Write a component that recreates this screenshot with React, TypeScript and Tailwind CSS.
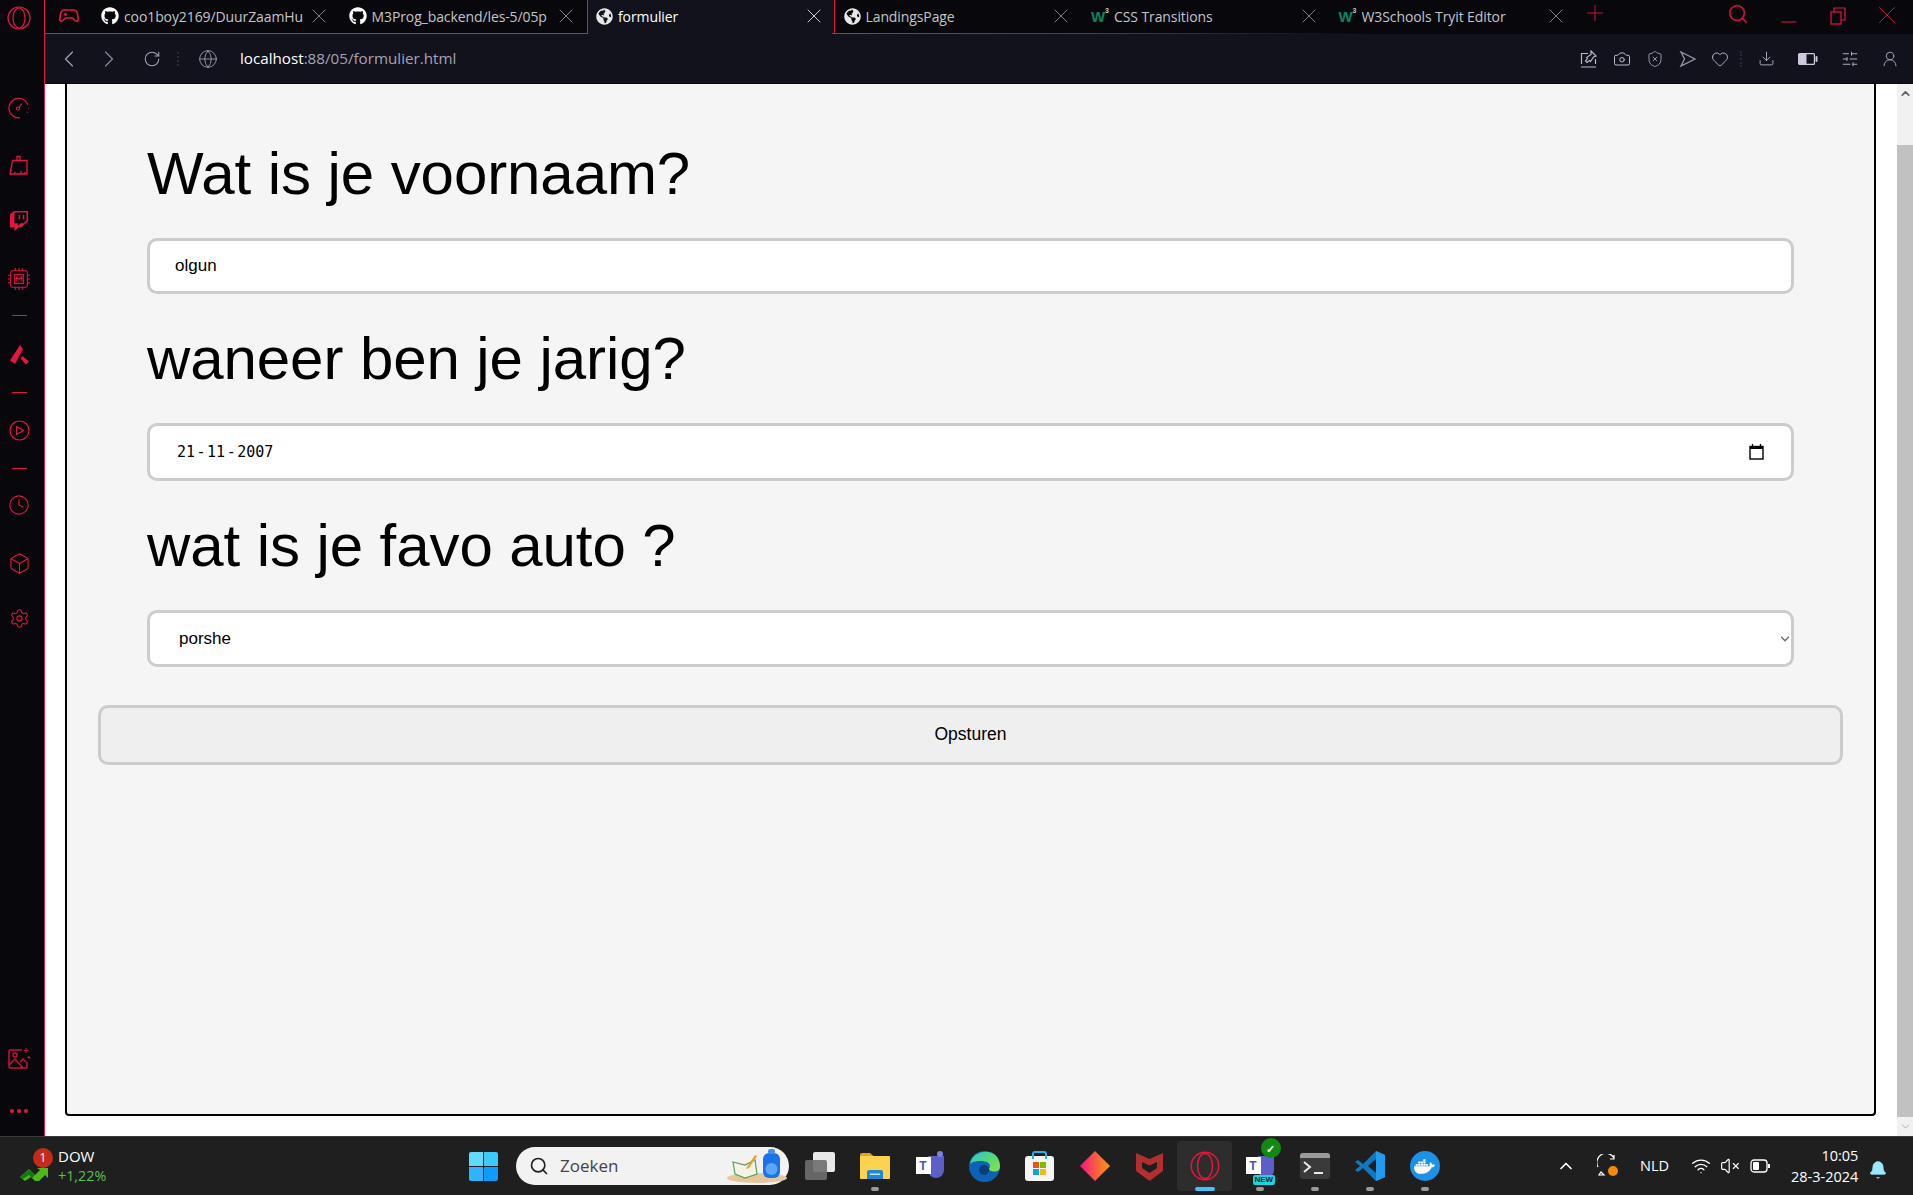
import {
  Box,
  Camera,
  ChevronDown,
  ChevronLeft,
  ChevronRight,
  ChevronUp,
  Clock,
  Download,
  Globe,
  Heart,
  Minus,
  Plus,
  RotateCw,
  Search,
  Settings,
  ShieldX,
  SlidersHorizontal,
  UserRound,
  VolumeX,
  Wifi,
  X,
  Bell,
} from "lucide-react";
import { FaDocker, FaGithub, FaGlobeAmericas, FaTwitch } from "react-icons/fa";

const ui = "font-['Open_Sans','Noto_Sans',sans-serif]";

function OperaLogo({ size = 24, className = "text-[#e3173e]" }: { size?: number; className?: string }) {
  return (
    <svg width={size} height={size} viewBox="0 0 24 24" fill="none" stroke="currentColor" strokeWidth="1.2" className={className}>
      <circle cx="12" cy="12" r="11" />
      <ellipse cx="12" cy="12" rx="6" ry="10" />
    </svg>
  );
}

function W3Logo() {
  return (
    <span className="relative w-[18px] shrink-0 font-['Liberation_Sans',sans-serif] text-[15px] leading-none font-bold text-[#04895e]">
      W<span className="absolute -top-[2px] right-0 text-[7px] text-[#c9c9c9]">3</span>
    </span>
  );
}

type TabItem = { title: string; icon: "github" | "globe" | "w3"; active?: boolean };

const tabs: TabItem[] = [
  { title: "coo1boy2169/DuurZaamHu", icon: "github" },
  { title: "M3Prog_backend/les-5/05p", icon: "github" },
  { title: "formulier", icon: "globe", active: true },
  { title: "LandingsPage", icon: "globe" },
  { title: "CSS Transitions", icon: "w3" },
  { title: "W3Schools Tryit Editor", icon: "w3" },
];

function Tab({ tab }: { tab: TabItem }) {
  return (
    <div
      className={
        tab.active
          ? "flex h-[34px] w-[247.5px] shrink-0 items-center gap-[5px] border-x border-[#e3173e] bg-[#12121c] pr-[8px] pb-[2px] pl-[8px] text-white"
          : "flex h-[34px] w-[247.5px] shrink-0 items-center gap-[5px] pr-[9px] pb-[2px] pl-[9px] text-[#c4c4c8]"
      }
    >
      {tab.icon === "github" && <FaGithub size={18} className="shrink-0 text-white" />}
      {tab.icon === "globe" && <FaGlobeAmericas size={17} className="shrink-0 text-[#e8e8e8]" />}
      {tab.icon === "w3" && <W3Logo />}
      <span className="min-w-0 flex-1 overflow-hidden text-[14px] tracking-[-0.1px] whitespace-nowrap">{tab.title}</span>
      <X size={24} strokeWidth={0.8} className={tab.active ? "-ml-[2px] shrink-0 text-white" : "-ml-[2px] shrink-0 text-[#a0a0a4]"} />
    </div>
  );
}

function TabStrip() {
  return (
    <div className="relative flex h-[34px] shrink-0 bg-[#07070c]">
      <div className="flex w-[47px] shrink-0 items-center justify-center pb-[2px]">
        <svg width="20" height="16" viewBox="0 0 20 16" fill="none" stroke="#e3173e" strokeWidth="1.6">
          <path d="M5 2h10c2 0 3 1.500 3.500 4l.8 5c.2 2-1.800 3-3.300 1.500L13.500 10h-7L4 12.500C2.500 14 .5 13 .7 11l.8-5C2 3.500 3 2 5 2z" />
          <path d="M5 6.500h3M6.500 5v3M13 6.500h.1M15 6.500h.1" />
        </svg>
      </div>
      {tabs.map((tab) => (
        <Tab key={tab.title} tab={tab} />
      ))}
      <Plus size={26} strokeWidth={0.8} className="ml-[5px] text-[#e3173e]" />
      <Search size={22} strokeWidth={1.9} className="mt-[3px] ml-[119px] text-[#c8143c]" />
      <Minus size={24} strokeWidth={1} className="mt-[10px] ml-[28px] text-[#e3173e]" />
      <svg width="17" height="18" viewBox="0 0 17 18" fill="none" stroke="#e3173e" strokeWidth="1.2" className="mt-[7px] ml-[29px]">
        <rect x="1" y="5" width="10" height="12" />
        <path d="M4 5V1h11v12h-4" />
      </svg>
      <X size={30} strokeWidth={0.7} className="ml-[25px] text-[#e3173e]" />
      {/* red line under the tabs, stops at the active tab */}
      <div className="absolute top-[33px] left-0 h-px w-[542px] bg-[#e3173e]" />
      <div className="absolute top-[33px] left-[787px] h-px w-[540px] bg-gradient-to-r from-[#e3173e] via-[#a3142f] to-transparent" />
    </div>
  );
}

function PinIcon() {
  return (
    <svg width="18" height="18" viewBox="0 0 18 18" fill="none" stroke="#b9b6c6" strokeWidth="1.2">
      <path d="M1 17h15M1.500 14V3.500H8M15.500 9v5" />
      <path d="M11 1l5 5-2.500 1-3 4.500-1-1L7 12.500 5.500 11l2-2.500-1-1L11 4.500z" />
    </svg>
  );
}

function SendIcon() {
  return (
    <svg width="18" height="18" viewBox="0 0 18 18" fill="none" stroke="#9a97a6" strokeWidth="1.3">
      <path d="M2 2l14 7-14 7 3.500-7z" />
    </svg>
  );
}

function BatteryIcon() {
  return (
    <svg width="20" height="12" viewBox="0 0 20 12" fill="none">
      <rect x=".6" y=".6" width="15.800" height="10.800" rx="1" stroke="#cfc9dd" strokeWidth="1.200" />
      <rect x="1" y="1" width="7.500" height="10" fill="#cfc9dd" />
      <rect x="17.500" y="3" width="2" height="6" rx="1" fill="#cfc9dd" />
    </svg>
  );
}

function Toolbar() {
  return (
    <div className={`flex h-[50px] shrink-0 items-center border-b border-[#08080c] bg-[#12121c] pr-[14px] pl-[10px] ${ui} text-[#a6a3b4]`}>
      <ChevronLeft size={28} strokeWidth={1} />
      <ChevronRight size={28} strokeWidth={1} className="ml-[12px] text-[#8b8896]" />
      <RotateCw size={18} strokeWidth={1.4} className="ml-[20px]" />
      <span className="ml-[16px] h-[14px] w-[2px] border-l-2 border-dotted border-[#2a2a36]" />
      <Globe size={20} strokeWidth={1} className="ml-[19px]" />
      <div className="ml-[22px] text-[15.2px] leading-none whitespace-nowrap">
        <span className="text-white">localhost</span>
        <span className="text-[#a6a3b4]">:88/05/formulier.html</span>
      </div>
      <div className="ml-auto flex items-center">
        <PinIcon />
        <Camera size={18} strokeWidth={1.3} className="ml-[15px] text-[#c2bfcf]" />
        <ShieldX size={18} strokeWidth={1.2} className="ml-[15px] text-[#a6a3b4]" />
        <span className="ml-[15px]"><SendIcon /></span>
        <Heart size={18} strokeWidth={1.2} className="ml-[14px] text-[#c2bfcf]" />
        <span className="ml-[11px] h-[16px] w-[2px] border-l-2 border-dotted border-[#2a2a36]" />
        <Download size={17} strokeWidth={1.2} className="ml-[16px] text-[#c2bfcf]" />
        <span className="ml-[23px]"><BatteryIcon /></span>
        <SlidersHorizontal size={18} strokeWidth={1.2} className="ml-[23px] text-[#c2bfcf]" />
        <UserRound size={18} strokeWidth={1.3} className="ml-[22px] text-[#a6a3b4]" />
      </div>
    </div>
  );
}

function SpeedIcon() {
  return (
    <svg width="22" height="22" viewBox="0 0 22 22" fill="none" stroke="#e3173e" strokeWidth="1.200">
      <path d="M20 8A9.800 9.800 0 1 0 12 20.800" />
      <path d="M20.700 11v.8M19.500 15v.8" />
      <circle cx="10" cy="11.500" r="1.500" />
      <path d="M11 10.500l3-4" />
    </svg>
  );
}

function BroomIcon() {
  return (
    <svg width="22" height="22" viewBox="0 0 22 22" fill="none" stroke="#e3173e" strokeWidth="1.300">
      <path d="M9 6V2.500h3V6" />
      <path d="M4.500 6.500h14.500v13.500H2z" />
      <path d="M3 16.500h1M7 20v-2M13 20v-3M17 20v-2" />
    </svg>
  );
}

function CpuIcon() {
  return (
    <svg width="26" height="26" viewBox="0 0 26 26" fill="none" stroke="#e3173e" strokeWidth="1.100">
      <rect x="4" y="4" width="18" height="18" rx="2" />
      <rect x="8" y="8" width="10" height="10" fill="#e3173e" fillOpacity=".25" />
      <path d="M10 15v-4l3 2.500 3-2.500v4" />
      <path d="M9 1v3M13 1v3M17 1v3M9 22v3M13 22v3M17 22v3M1 9h3M1 13h3M1 17h3M22 9h3M22 13h3M22 17h3" />
    </svg>
  );
}

function PeakIcon() {
  return (
    <svg width="22" height="22" viewBox="0 0 22 22" fill="#e3173e">
      <path d="M12 1l3 4-8 15-5-3.500zM14.500 12l6.500 5.500-3 3-5.500-6z" />
    </svg>
  );
}

function GalleryIcon() {
  return (
    <svg width="24" height="24" viewBox="0 0 24 24" fill="none" stroke="#c8143c" strokeWidth="1.500">
      <path d="M15 3H3a1 1 0 0 0-1 1v16a1 1 0 0 0 1 1h16a1 1 0 0 0 1-1v-5" />
      <circle cx="8" cy="8" r="2" />
      <path d="M2 18l6-6 8 9M13 15l3-3 3 3" />
      <path d="M19 1v5M16.500 3.500h5M22 9v3M20.500 10.500h3" strokeWidth="1" />
    </svg>
  );
}

function SideLine({ className }: { className: string }) {
  return <div className={`h-px w-[15px] shrink-0 bg-[#e3173e] ${className}`} />;
}

function Sidebar() {
  const slot = "flex h-6 w-6 shrink-0 items-center justify-center text-[#e3173e]";
  return (
    <aside className="flex h-[1136px] w-[45px] shrink-0 flex-col items-center border-r border-[#e3173e] bg-[#07070c] pr-[6px] pb-[13px]">
      <div className={`${slot} mt-[6px]`}><OperaLogo /></div>
      <div className={`${slot} mt-[66px]`}><SpeedIcon /></div>
      <div className={`${slot} mt-[33px]`}><BroomIcon /></div>
      <div className={`${slot} mt-[32px]`}><FaTwitch size={20} /></div>
      <div className={`${slot} mt-[34px]`}><CpuIcon /></div>
      <SideLine className="mt-[24px]" />
      <div className={`${slot} mt-[27px]`}><PeakIcon /></div>
      <SideLine className="mt-[25px]" />
      <div className={`${slot} mt-[25px]`}>
        <svg width="21" height="21" viewBox="0 0 21 21" fill="none" stroke="currentColor" strokeWidth="1.200">
          <circle cx="10.500" cy="10.500" r="9.500" />
          <path d="M7.500 6.500l7 4-7 4z" />
        </svg>
      </div>
      <SideLine className="mt-[26px]" />
      <div className={`${slot} mt-[24px]`}><Clock size={22} strokeWidth={1.2} /></div>
      <div className={`${slot} mt-[34px]`}><Box size={23} strokeWidth={1.1} /></div>
      <div className={`${slot} mt-[31px]`}><Settings size={21} strokeWidth={1.2} /></div>
      <div className={`${slot} mt-auto`}><GalleryIcon /></div>
      <div className="mt-[28px] flex h-6 items-center gap-[3px]">
        <span className="h-1 w-1 rounded-full bg-[#e3173e]" />
        <span className="h-1 w-1 rounded-full bg-[#e3173e]" />
        <span className="h-1 w-1 rounded-full bg-[#e3173e]" />
      </div>
    </aside>
  );
}

function FormPage() {
  const field = "rounded-[10px] border-[3px] border-[#cccccc] bg-white text-[17px] text-black";
  const heading = "mx-[49px] text-[60px] leading-[69px] font-normal tracking-[-0.08px] text-black";
  return (
    <div className="flex min-w-0 flex-1 bg-white pr-[21px] pb-[20px] pl-[20px]">
      <form className="flex-1 rounded-b-[4px] border-x-[2px] border-b-[2px] border-black bg-[#f5f5f5] px-[31px] pt-[55px] font-['Liberation_Sans',sans-serif]">
        <h2 className={heading}>Wat is je voornaam?</h2>
        <div className="mx-[49px] mt-[30px]">
          <input type="text" defaultValue="olgun" className={`${field} block h-[56px] w-full pl-[25px] outline-none`} />
        </div>
        <h2 className={`${heading} mt-[30px]`}>waneer ben je jarig?</h2>
        <div className={`${field} mx-[49px] mt-[30px] flex h-[58px] items-center pr-[27px] pl-[27px]`}>
          <span className="flex gap-[1.5px] font-['DejaVu_Sans_Mono',monospace] text-[15px] leading-none">
            <span>21</span>
            <span>-</span>
            <span>11</span>
            <span>-</span>
            <span>2007</span>
          </span>
          <svg width="15" height="16" viewBox="0 0 15 16" fill="none" className="ml-auto">
            <rect x="1" y="2.500" width="13" height="12.500" stroke="black" strokeWidth="1.400" />
            <rect x="1" y="2" width="13" height="3" fill="black" />
            <path d="M3.500 0v3M11.500 0v3" stroke="black" strokeWidth="1.300" />
          </svg>
        </div>
        <h2 className={`${heading} mt-[30px]`}>wat is je favo auto ?</h2>
        <div className="relative mx-[49px] mt-[30px]">
          <select defaultValue="porshe" className={`${field} block h-[57px] w-full appearance-none pl-[29px] outline-none`}>
            <option value="porshe">porshe</option>
          </select>
          <ChevronDown size={14} strokeWidth={2.2} className="absolute top-[22px] right-[2px] text-[#666666]" />
        </div>
        <button type="button" className="mt-[38px] block h-[60px] w-full rounded-[10px] border-[3px] border-[#cccccc] bg-[#efefef] pb-[2px] text-[17.5px] text-black">
          Opsturen
        </button>
      </form>
    </div>
  );
}

function Scrollbar() {
  return (
    <div className="flex w-4 shrink-0 flex-col items-center bg-[#f1f1f1] text-[#606060]">
      <ChevronUp size={13} strokeWidth={3} className="mt-[3px] h-[13px]" />
      <div className="mt-[45px] w-full flex-1 bg-[#c1c1c1]" />
      <ChevronDown size={13} strokeWidth={1.6} className="mt-[3px] mb-[3px] text-[#a3a3a3]" />
    </div>
  );
}

function WindowsLogo() {
  return (
    <div className="grid h-[29px] w-[29px] grid-cols-2 gap-[1px]">
      <span className="rounded-tl-[2px] bg-[#5fdcfb]" />
      <span className="rounded-tr-[2px] bg-[#3ccbf8]" />
      <span className="rounded-bl-[2px] bg-[#2cb6f9]" />
      <span className="rounded-br-[2px] bg-[#0f9bfb]" />
    </div>
  );
}

function TaskViewIcon() {
  return (
    <div className="relative h-[28px] w-[30px]">
      <div className="absolute top-0 right-0 h-[20px] w-[22px] rounded-[2px] bg-[#e8e8e8]" />
      <div className="absolute bottom-0 left-0 h-[20px] w-[22px] rounded-[2px] bg-[#6e6e6e]/90" />
    </div>
  );
}

function FolderIcon() {
  return (
    <svg width="30" height="26" viewBox="0 0 30 26">
      <path d="M0 2a2 2 0 0 1 2-2h8l4 3.500H0z" fill="#e0a526" />
      <rect y="3" width="30" height="23" rx="1" fill="#fcd34d" />
      <path d="M7 26V19a2 2 0 0 1 2-2h12a2 2 0 0 1 2 2v7z" fill="#1f88d8" />
      <rect x="10" y="20.500" width="10" height="1.500" fill="#bfe3ff" />
    </svg>
  );
}

function TeamsIcon() {
  return (
    <div className="relative h-[30px] w-[28px]">
      <div className="absolute top-[5px] right-0 h-[22px] w-[16px] rounded-b-[8px] bg-[#5b5fc7]" />
      <div className="absolute top-0 right-[1px] h-[6px] w-[6px] rounded-full bg-[#7b83eb]" />
      <div className="absolute top-[6px] left-0 flex h-[17px] w-[15px] items-center justify-center bg-white font-['Liberation_Sans',sans-serif] text-[12px] font-bold text-[#4b53bc]">T</div>
    </div>
  );
}

function EdgeIcon() {
  return (
    <svg width="31" height="31" viewBox="0 0 31 31">
      <defs>
        <linearGradient id="edge" x1="0" y1="0" x2="1" y2="1">
          <stop offset="0" stopColor="#2cc4d6" />
          <stop offset=".5" stopColor="#55d67a" />
          <stop offset="1" stopColor="#8fe04a" />
        </linearGradient>
      </defs>
      <circle cx="15.500" cy="15.500" r="15.500" fill="#0c63b5" />
      <path d="M1 13C3 3 13-1 22 1.500c6 2 9 8 9 14 0 3-2 5-6 5-3 0-5-1-5-3 2-2 1-6-4-7C10 9.500 4 10 1 13z" fill="url(#edge)" />
      <circle cx="15" cy="19" r="5" fill="#0a3d7a" />
    </svg>
  );
}

function StoreIcon() {
  return (
    <div className="relative flex h-[30px] w-[29px] items-end">
      <div className="absolute top-0 left-[7px] h-[8px] w-[15px] rounded-t-[3px] border-x-2 border-t-2 border-[#28b0e8]" />
      <div className="grid h-[25px] w-full grid-cols-2 content-center justify-center gap-[1px] rounded-[3px] bg-[#f5f5f5] px-[8px]">
        <span className="h-[6px] bg-[#f25022]" />
        <span className="h-[6px] bg-[#7fba00]" />
        <span className="h-[6px] bg-[#00a4ef]" />
        <span className="h-[6px] bg-[#ffb900]" />
      </div>
    </div>
  );
}

function DiamondIcon() {
  return (
    <svg width="30" height="30" viewBox="0 0 30 30">
      <defs>
        <linearGradient id="dia" x1="0" y1="0" x2="1" y2="0">
          <stop offset="0" stopColor="#f5157e" />
          <stop offset="1" stopColor="#fb9a0c" />
        </linearGradient>
      </defs>
      <path d="M15 0l15 15-15 15L0 15z" fill="url(#dia)" />
    </svg>
  );
}

function McAfeeIcon() {
  return (
    <svg width="27" height="30" viewBox="0 0 27 30" fill="#b32f2f">
      <path d="M0 2l13.500 6L27 2v18L13.500 30 0 20zM6 11v6l7.500 5 7.500-5v-6l-7.500 3.500z" fillRule="evenodd" />
    </svg>
  );
}

function TeamsNewIcon() {
  return (
    <div className="relative h-[30px] w-[28px]">
      <TeamsIcon />
      <div className="absolute -top-[13px] -right-[7px] flex h-[20px] w-[20px] items-center justify-center rounded-full bg-[#118a12] text-[11px] leading-none font-bold text-white">✓</div>
      <div className="absolute -bottom-[4px] left-[7px] rounded-[2px] bg-[#1bd4de] px-[2px] font-['Liberation_Sans',sans-serif] text-[8px] leading-[10px] font-bold text-[#102030]">NEW</div>
    </div>
  );
}

function TerminalIcon() {
  return (
    <div className="h-[26px] w-[30px] overflow-hidden rounded-[3px] bg-[#3a3a3a]">
      <div className="h-[5px] bg-[#9a9a9a]" />
      <svg width="30" height="21" viewBox="0 0 30 21" fill="none" stroke="#e8e8e8" strokeWidth="2">
        <path d="M4 4l6 5-6 5M14 15h9" />
      </svg>
    </div>
  );
}

function VsCodeIcon() {
  return (
    <svg width="30" height="30" viewBox="0 0 30 30">
      <path d="M21 0l9 4v22l-9 4L8 17l-5 4-3-2 5-4-5-4 3-2 5 4z" fill="#0f78c0" />
      <path d="M21 0l9 4v22l-9 4z" fill="#1f9cf0" />
      <path d="M21 8l-8 7 8 7z" fill="#1f1f1f" />
    </svg>
  );
}

function DockerIcon() {
  return (
    <div className="flex h-[30px] w-[30px] items-center justify-center rounded-full bg-[#1d91e6]">
      <FaDocker size={21} className="text-white" />
    </div>
  );
}

const apps = [
  { key: "tasks", el: <TaskViewIcon /> },
  { key: "files", el: <FolderIcon />, dot: true },
  { key: "teams", el: <TeamsIcon /> },
  { key: "edge", el: <EdgeIcon /> },
  { key: "store", el: <StoreIcon /> },
  { key: "diamond", el: <DiamondIcon /> },
  { key: "mcafee", el: <McAfeeIcon /> },
  { key: "opera", el: <OperaLogo size={30} />, active: true },
  { key: "teamsnew", el: <TeamsNewIcon />, dot: true },
  { key: "terminal", el: <TerminalIcon />, dot: true },
  { key: "vscode", el: <VsCodeIcon />, dot: true },
  { key: "docker", el: <DockerIcon />, dot: true },
];

function SearchArt() {
  return (
    <svg width="60" height="36" viewBox="0 0 60 36" className="mr-[2px] ml-auto">
      <ellipse cx="30" cy="30" rx="30" ry="5" fill="#e6c79c" />
      <path d="M6 14l12 3 10-5 2 14-12 4-10-4z" fill="#f3f3e8" stroke="#5d9c59" strokeWidth="1.200" />
      <path d="M20 19l8-12 2 1-8 12-3 1z" fill="#f29a2e" />
      <rect x="36" y="5" width="17" height="25" rx="6" fill="#1a74e8" />
      <circle cx="44.500" cy="21" r="6" fill="#5aa8f5" />
      <rect x="41" y="1" width="7" height="5" rx="2" fill="#3f8ff0" />
    </svg>
  );
}

function Taskbar() {
  return (
    <footer className={`flex h-[59px] shrink-0 items-center border-t border-[#3a3a3a] bg-[#1f1f1f] ${ui} text-white`}>
      <div className="flex w-[469px] shrink-0 items-center pl-[20px]">
        <div className="relative h-[30px] w-[38px]">
          <svg width="28" height="16" viewBox="0 0 28 16" className="absolute bottom-0 left-0">
            <path d="M0 12L9 4l6 6 5-5-3-2h11v10l-3-3-8 8-6-6-6 4z" fill="#4fb81c" />
            <path d="M0 12L9 4l6 6-3 3-3-3-6 4z" fill="#137a13" />
          </svg>
          <div className="absolute -top-[3px] left-[13px] flex h-5 w-5 items-center justify-center rounded-full bg-[#c42b1c] text-[12px] leading-none">1</div>
        </div>
        <div className="flex flex-col leading-[20px]">
          <span className="text-[15px]">DOW</span>
          <span className="text-[14.3px] text-[#5fbf4f]">+1,22%</span>
        </div>
      </div>
      <WindowsLogo />
      <div className="ml-[18px] flex h-[38px] w-[273px] shrink-0 items-center rounded-full bg-[#f2f2f2] pl-[13px] text-[#444]">
        <Search size={20} strokeWidth={2} className="text-[#222]" />
        <span className="ml-[11px] text-[17px]">Zoeken</span>
        <SearchArt />
      </div>
      <div className="ml-[3px] flex">
        {apps.map((app) => (
          <div
            key={app.key}
            className={
              app.active
                ? "relative flex h-[50px] w-[55px] items-center justify-center rounded-[4px] bg-[#2d2d2d]"
                : "relative flex h-[50px] w-[55px] items-center justify-center"
            }
          >
            {app.el}
            {app.dot && <span className="absolute bottom-0 left-[24px] h-[4px] w-[8px] rounded-full bg-[#9a9a9a]" />}
            {app.active && <span className="absolute bottom-0 left-[18px] h-[4px] w-[20px] rounded-full bg-[#47bffa]" />}
          </div>
        ))}
      </div>
      <div className="ml-[104px] flex items-center">
        <ChevronUp size={20} strokeWidth={2} />
        <svg width="22" height="24" viewBox="0 0 22 24" fill="none" stroke="white" strokeWidth="1.200" className="ml-[21px]">
          <path d="M1 13A9 9 0 0 1 17 4M17 1v4h-4M4 18l3 3H2z" />
          <circle cx="16" cy="17" r="5" fill="#f58a07" stroke="none" />
        </svg>
        <span className="ml-[21px] text-[14.5px]">NLD</span>
        <Wifi size={20} strokeWidth={1.6} className="ml-[22px]" />
        <VolumeX size={20} strokeWidth={1.4} className="ml-[9px]" />
        <svg width="21" height="14" viewBox="0 0 21 14" fill="none" className="ml-[10px]">
          <rect x="1" y="1" width="16" height="12" rx="3" stroke="white" strokeWidth="1.300" />
          <rect x="3" y="3" width="6" height="8" rx="1" fill="white" />
          <rect x="18" y="5" width="2" height="4" fill="white" />
        </svg>
        <div className="ml-[20px] flex flex-col items-end text-[14.5px] leading-[21px]">
          <span>10:05</span>
          <span>28-3-2024</span>
        </div>
        <Bell size={20} fill="#9be7fb" strokeWidth={1} className="mt-[8px] ml-[10px] text-[#9be7fb]" />
      </div>
    </footer>
  );
}

export default function App() {
  return (
    <div className="flex h-[1195px] w-[1913px] flex-col overflow-hidden">
      <div className="flex min-h-0 flex-1">
        <Sidebar />
        <div className="flex min-w-0 flex-1 flex-col">
          <div className={ui}>
            <TabStrip />
          </div>
          <Toolbar />
          <div className="flex min-h-0 flex-1">
            <FormPage />
            <Scrollbar />
          </div>
        </div>
      </div>
      <Taskbar />
    </div>
  );
}
